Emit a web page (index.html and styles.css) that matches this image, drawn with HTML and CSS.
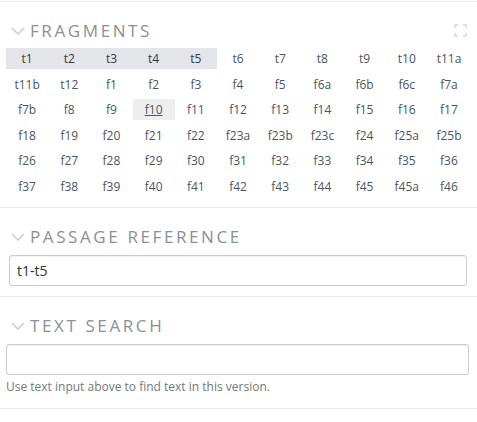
FILE: index.html
```html
<!DOCTYPE html>
<html lang="en">

<head>
    <meta charset="UTF-8" />
    <meta name="viewport" content="width=device-width, initial-scale=1.0" />
    <title>Navigation</title>
    <link rel="stylesheet" href="styles.css">
</head>

<body>
    <div class="panel">
        <section class="block fragments">
            <div class="block-head">
                <svg class="chevron" width="14" height="8" viewBox="0 0 14 8">
                    <path d="M1 1 L7 7 L13 1" fill="none" stroke="#c9cdd2" stroke-width="1.6" />
                </svg>
                <h3>Fragments</h3>
                <svg class="expand" width="13" height="13" viewBox="0 0 13 13">
                    <path d="M1 4 V1 H4 M9 1 H12 V4 M12 9 V12 H9 M4 12 H1 V9" fill="none" stroke="#d6d8db" stroke-width="1.5" />
                </svg>
            </div>
            <div class="frag-grid" id="frag-grid"></div>
        </section>

        <section class="block">
            <div class="block-head">
                <svg class="chevron" width="14" height="8" viewBox="0 0 14 8">
                    <path d="M1 1 L7 7 L13 1" fill="none" stroke="#c9cdd2" stroke-width="1.6" />
                </svg>
                <h3>Passage Reference</h3>
            </div>
            <input class="field ref-field" type="text" value="t1-t5" />
        </section>

        <section class="block">
            <div class="block-head">
                <svg class="chevron" width="14" height="8" viewBox="0 0 14 8">
                    <path d="M1 1 L7 7 L13 1" fill="none" stroke="#c9cdd2" stroke-width="1.6" />
                </svg>
                <h3>Text Search</h3>
            </div>
            <input class="field search-field" type="text" />
            <p class="hint">Use text input above to find text in this version.</p>
        </section>
    </div>

    <script>
        // список фрагментів
        const names = ['t1', 't2', 't3', 't4', 't5', 't6', 't7', 't8', 't9', 't10', 't11a',
            't11b', 't12', 'f1', 'f2', 'f3', 'f4', 'f5', 'f6a', 'f6b', 'f6c', 'f7a',
            'f7b', 'f8', 'f9', 'f10', 'f11', 'f12', 'f13', 'f14', 'f15', 'f16', 'f17',
            'f18', 'f19', 'f20', 'f21', 'f22', 'f23a', 'f23b', 'f23c', 'f24', 'f25a', 'f25b',
            'f26', 'f27', 'f28', 'f29', 'f30', 'f31', 'f32', 'f33', 'f34', 'f35', 'f36',
            'f37', 'f38', 'f39', 'f40', 'f41', 'f42', 'f43', 'f44', 'f45', 'f45a', 'f46'];
        const selected = ['t1', 't2', 't3', 't4', 't5'];
        const grid = document.getElementById('frag-grid');

        names.forEach(function (name) {
            const cell = document.createElement('a');
            cell.className = 'frag';
            if (selected.includes(name)) cell.classList.add('selected');
            if (name === 'f10') cell.classList.add('hover');
            cell.textContent = name;
            grid.appendChild(cell);
        });
    </script>
</body>

</html>
```

FILE: styles.css
```css
body {
    margin: 0;
    font-family: "Open Sans", Arial, sans-serif;
    background: white;
    color: #4b5563;
}

.panel {
    padding-top: 1px;
}

.block {
    border-top: 1px solid #ebebeb;
    padding: 0 8px 10px 6px;
}

.block-head {
    display: flex;
    align-items: center;
    box-sizing: border-box;
    height: 47px;
    padding: 10px 0 0 5px;
}

.fragments .block-head {
    height: 46px;
}

.block-head h3 {
    margin: 0 0 0 5px;
    font-size: 17px;
    font-weight: normal;
    text-transform: uppercase;
    letter-spacing: 2.6px;
    color: #8a9098;
    flex: 1;
}

.chevron {
    margin-top: 1px;
}

.expand {
    margin-right: 2px;
}

.frag-grid {
    display: grid;
    grid-template-columns: repeat(11, 42.2px);
    grid-auto-rows: 21px;
    row-gap: 4.6px;
}

.frag {
    display: flex;
    align-items: center;
    justify-content: center;
    font-size: 12px;
    color: #4b5563;
    cursor: pointer;
}

.frag.selected {
    background: #e3e5e8;
    color: #333a44;
}

.frag.hover {
    background: #eceef0;
    text-decoration: underline;
}

.field {
    display: block;
    box-sizing: border-box;
    width: 100%;
    height: 31px;
    padding: 0 7px;
    border: 1px solid #cccccc;
    border-radius: 3px;
    box-shadow: inset 0 1px 1px rgba(0, 0, 0, 0.05);
    font-family: "Open Sans", Arial, sans-serif;
    font-size: 14px;
    color: #333;
}

.ref-field {
    margin-left: 3px;
    width: calc(100% - 5px);
}

.block:last-child {
    border-bottom: 1px solid #ebebeb;
    padding-bottom: 0;
}

.hint {
    margin: 3px 0 0;
    padding-bottom: 13px;
    font-size: 12px;
    color: #777;
}
```
